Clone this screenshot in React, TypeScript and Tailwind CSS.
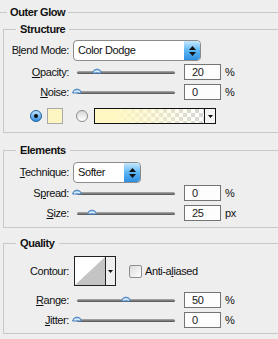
import React from "react"

const Acc = ({ children }: { children: React.ReactNode }) => <span className="underline underline-offset-[1px]">{children}</span>

function Thumb({ pos }: { pos: number }) {
  return (
    <svg className="absolute top-[4px]" style={{ left: `${pos * 98 - 2}px` }} width="10" height="7" viewBox="0 0 10 7">
      <path d="M0.5 5 Q1 1.5 5 1 Q9 1.5 9.5 5 Z" fill="#9ccaf0" stroke="#4a7fb8" strokeWidth="1" />
      <path d="M2 4 Q5 2.3 8 4" stroke="#e8f4ff" strokeWidth="1" fill="none" />
    </svg>
  )
}

function Slider({ pos }: { pos: number }) {
  return (
    <div className="relative flex h-[16px] w-[106px] items-center">
      <div className="ml-[3px] mt-[1px] h-[3px] w-[98px] rounded-full bg-gradient-to-b from-[#b0b0b0] to-[#505050]" />
      <Thumb pos={pos} />
    </div>
  )
}

function Field({ value, unit }: { value: string; unit: string }) {
  return (
    <>
      <div className="ml-[4px] flex h-[16px] w-[37px] items-center border border-[#747474] bg-[#fdfdfd] pl-[7px] text-[#1a1a1a]">
        {value}
      </div>
      <span className="ml-[4px]">{unit}</span>
    </>
  )
}

function SliderRow({ label, pos, value, unit, className = "" }: { label: React.ReactNode; pos: number; value: string; unit: string; className?: string }) {
  return (
    <div className={`flex h-[16px] items-center ${className}`}>
      <div className="w-[65px] text-right">{label}</div>
      <div className="ml-[5px]">
        <Slider pos={pos} />
      </div>
      <Field value={value} unit={unit} />
    </div>
  )
}

function Select({ value, width }: { value: string; width: string }) {
  return (
    <div className={`ml-[4px] flex h-[21px] ${width} overflow-hidden rounded-[4px] border border-[#8c8c8c] bg-white`}>
      <div className="flex flex-1 items-center pl-[4px]">{value}</div>
      <div className="flex w-[16px] flex-col items-center justify-center gap-[2px] rounded-r-[3px] bg-gradient-to-b from-[#c6e8fd] via-[#5ab6f3] to-[#2f8ee0]">
        <svg width="7" height="4" viewBox="0 0 7 4"><path d="M3.5 0 L7 4 L0 4 Z" fill="#111" /></svg>
        <svg width="7" height="4" viewBox="0 0 7 4"><path d="M0 0 L7 0 L3.5 4 Z" fill="#111" /></svg>
      </div>
    </div>
  )
}

const groupCls = "w-[290px] border-l border-t border-b border-[#c8c8c8]"
const legendCls = "ml-[12px] px-[4px] font-bold leading-[13px] bg-[#eeeeee]"

export default function App() {
  return (
    <div className="h-[339px] w-[278px] overflow-hidden bg-[#eeeeee] pt-[6px] font-['Liberation_Sans',Arial,sans-serif] text-[11px] leading-[13px] tracking-[-0.4px] text-[#111]">
      <fieldset className="w-full border-t border-[#c8c8c8]">
        <legend className="ml-[7px] px-[3px] font-bold leading-[13px]">Outer Glow</legend>

        {/* Structure */}
        <fieldset className={`mt-[4px] ml-[3px] pb-[8px] ${groupCls}`}>
          <legend className={legendCls}>Structure</legend>
          <div className="mt-[4px] flex h-[21px] items-center">
            <div className="w-[65px] text-right">B<Acc>l</Acc>end Mode:</div>
            <Select value="Color Dodge" width="w-[128px]" />
          </div>
          <SliderRow className="mt-[3px]" label={<><Acc>O</Acc>pacity:</>} pos={0.2} value="20" unit="%" />
          <SliderRow className="mt-[4px]" label={<><Acc>N</Acc>oise:</>} pos={0} value="0" unit="%" />
          <div className="mt-[8px] flex h-[16px] items-center pl-[26px]">
            <div className="flex h-[12px] w-[12px] items-center justify-center rounded-full border border-[#1d5f9e] bg-gradient-to-b from-[#bfe3ff] to-[#2f8de0]">
              <div className="h-[4px] w-[4px] rounded-full bg-[#0b0b0b]" />
            </div>
            <div className="ml-[5px] h-[16px] w-[16px] border border-[#a8a8a8] bg-[#fdf6c3]" />
            <div className="ml-[13px] h-[12px] w-[12px] rounded-full border border-[#8a8a8a] bg-gradient-to-b from-[#d8d8d8] to-white" />
            <div className="ml-[6px] flex h-[16px] w-[122px] border border-[#111]">
              <div
                className="flex-1 bg-[linear-gradient(to_right,#fff8c2,#fff8c2_15%,rgba(255,248,194,0)),repeating-conic-gradient(#d6d6d6_0%_25%,#ffffff_0%_50%)] bg-[length:100%_100%,8px_8px]"
              />
              <div className="flex w-[11px] items-center justify-center border-l border-[#111] bg-[#f4f4f4]">
                <svg width="5" height="3" viewBox="0 0 5 3"><path d="M0 0 L5 0 L2.5 3 Z" fill="#111" /></svg>
              </div>
            </div>
          </div>
        </fieldset>

        {/* Elements */}
        <fieldset className={`mt-[11px] ml-[3px] pb-[6px] ${groupCls}`}>
          <legend className={legendCls}>Elements</legend>
          <div className="mt-[5px] flex h-[21px] items-center">
            <div className="w-[65px] text-right"><Acc>T</Acc>echnique:</div>
            <Select value="Softer" width="w-[68px]" />
          </div>
          <SliderRow className="mt-[2px]" label={<>S<Acc>p</Acc>read:</>} pos={0} value="0" unit="%" />
          <SliderRow className="mt-[4px]" label={<><Acc>S</Acc>ize:</>} pos={0.15} value="25" unit="px" />
        </fieldset>

        {/* Quality */}
        <fieldset className={`mt-[9px] ml-[3px] pb-[5px] ${groupCls}`}>
          <legend className={legendCls}>Quality</legend>
          <div className="mt-[6px] flex h-[30px] items-center">
            <div className="w-[65px] text-right">Contour:</div>
            <div className="ml-[5px] flex h-[30px] w-[42px] border border-[#222]">
              <svg width="30" height="28" viewBox="0 0 30 28" className="bg-white">
                <path d="M0 28 L30 0 L30 28 Z" fill="#c4c4c4" />
              </svg>
              <div className="flex flex-1 items-center justify-center border-l border-[#222] bg-[#efefef]">
                <svg width="5" height="3" viewBox="0 0 5 3"><path d="M0 0 L5 0 L2.5 3 Z" fill="#111" /></svg>
              </div>
            </div>
            <div className="ml-[13px] h-[13px] w-[13px] rounded-[2px] border border-[#8e8e8e] bg-gradient-to-br from-[#dcdcdc] to-white" />
            <span className="ml-[3px]">Anti-a<Acc>l</Acc>iased</span>
          </div>
          <SliderRow className="mt-[6px]" label={<><Acc>R</Acc>ange:</>} pos={0.5} value="50" unit="%" />
          <SliderRow className="mt-[4px]" label={<><Acc>J</Acc>itter:</>} pos={0} value="0" unit="%" />
        </fieldset>
      </fieldset>
    </div>
  )
}
